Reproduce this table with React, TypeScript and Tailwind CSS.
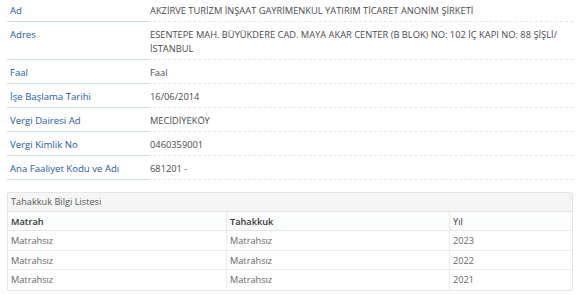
import React from "react";

const rows: { label: string; value: React.ReactNode }[] = [
  { label: "Ad", value: "AKZİRVE TURİZM İNŞAAT GAYRİMENKUL YATIRIM TİCARET ANONİM ŞİRKETİ" },
  {
    label: "Adres",
    value: (
      <>
        ESENTEPE MAH. BÜYÜKDERE CAD. MAYA AKAR CENTER (B BLOK) NO: 102 İÇ KAPI NO: 88 ŞİŞLİ/
        <br />
        İSTANBUL
      </>
    ),
  },
  { label: "Faal", value: "Faal" },
  { label: "İşe Başlama Tarihi", value: "16/06/2014" },
  { label: "Vergi Dairesi Ad", value: "MECİDİYEKÖY" },
  { label: "Vergi Kimlik No", value: "0460359001" },
  { label: "Ana Faaliyet Kodu ve Adı", value: "681201 -" },
];

const tableRows = [
  ["Matrahsız", "Matrahsız", "2023"],
  ["Matrahsız", "Matrahsız", "2022"],
  ["Matrahsız", "Matrahsız", "2021"],
];

export default function App() {
  return (
    <div
      className="w-[584px] h-[295px] overflow-hidden bg-white pl-[7px] pr-[11px] text-[#4a4a4a]"
      style={{ fontFamily: '"Open Sans", "Noto Sans", sans-serif' }}
    >
      <div className="flex flex-col">
        {rows.map((r, i) => (
          <div key={r.label} className="flex">
            <div
              className={`w-[141px] shrink-0 border-b border-[#c9dced] pl-[3px] text-[#1d5b9b] text-[9.6px] leading-[14px] ${
                i === 0 ? "pt-[4px] pb-[3px]" : "pt-[6px] pb-[3px]"
              }`}
            >
              {r.label}
            </div>
            <div
              className={`flex-1 border-b border-dashed border-[#dfe9f3] pl-[2px] text-[9.3px] leading-[14px] ${
                i === 0 ? "pt-[4px] pb-[3px]" : "pt-[6px] pb-[3px]"
              }`}
            >
              {r.value}
            </div>
          </div>
        ))}
      </div>

      <div className="mt-[12px] border border-[#e6e6e6] rounded-[2px] text-[9.2px]">
        <div className="bg-[#f5f5f5] border-b border-[#e4e4e4] px-[3px] leading-[18px] h-[19px] text-[#555] shadow-[0_1px_2px_rgba(0,0,0,0.06)]">
          Tahakkuk Bilgi Listesi
        </div>
        <div className="grid grid-cols-[218px_223px_1fr]">
          <div className="px-[3px] h-[19px] leading-[19px] font-semibold text-[#333] bg-[#fbfdfd] border-b border-[#e8e8e8]">
            Matrah
          </div>
          <div className="px-[3px] h-[19px] leading-[19px] font-semibold text-[#333] bg-[#fbfdfd] border-b border-l border-[#e8e8e8]">
            Tahakkuk
          </div>
          <div className="px-[3px] h-[19px] leading-[19px] text-[#333] bg-[#fbfdfd] border-b border-l border-[#e8e8e8]">
            Yıl
          </div>
          {tableRows.map((tr, ri) =>
            tr.map((c, ci) => (
              <div
                key={`${ri}-${ci}`}
                className={`px-[3px] h-[19.5px] leading-[19px] text-[#666] ${
                  ri < tableRows.length - 1 ? "border-b border-[#ececec]" : ""
                } ${ci > 0 ? "border-l border-[#ececec]" : ""}`}
              >
                {c}
              </div>
            ))
          )}
        </div>
      </div>
    </div>
  );
}
